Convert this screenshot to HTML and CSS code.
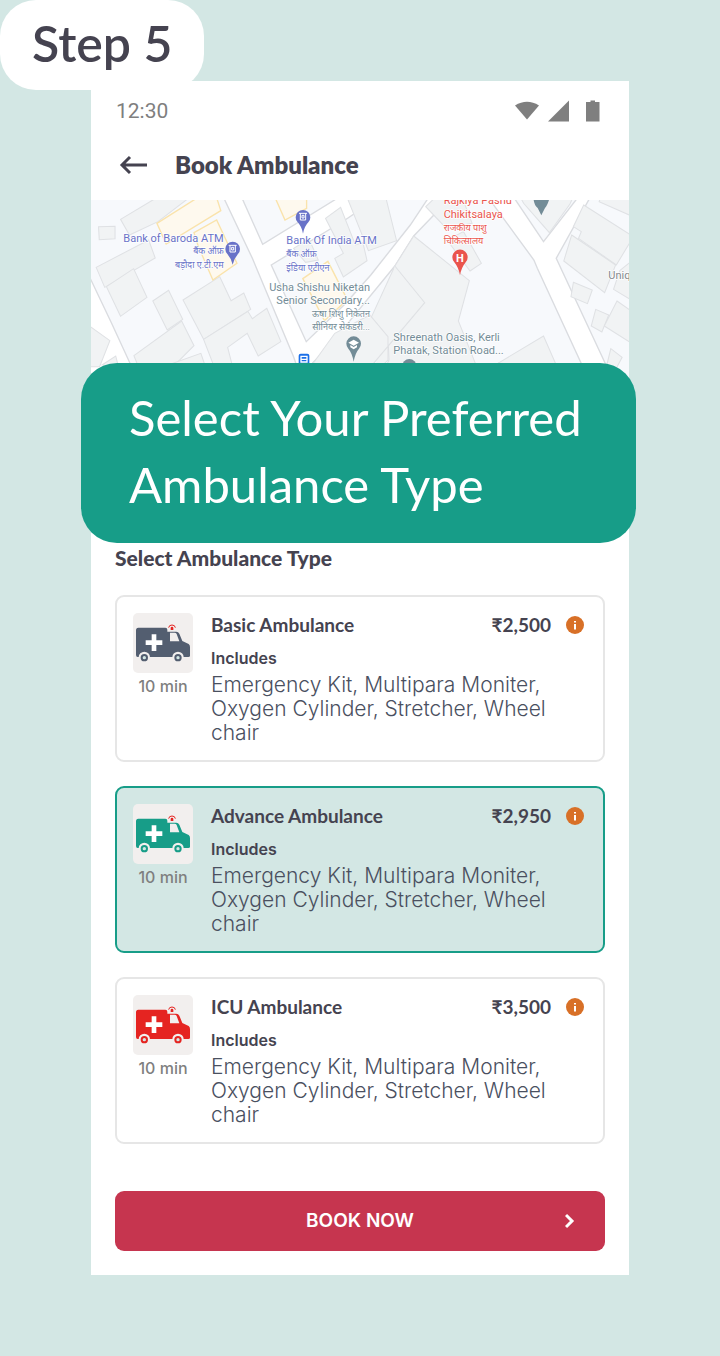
FILE: index.html
```html
<!DOCTYPE html>
<html lang="en">
<head>
<meta charset="utf-8">
<meta name="viewport" content="width=device-width, initial-scale=1">
<title>Book Ambulance</title>
<link rel="stylesheet" href="styles.css">
</head>
<body>
<svg width="0" height="0" class="defs" aria-hidden="true">
  <symbol id="ambulance" viewBox="0 0 180 180">
    <path fill="currentColor" d="M16 44H97Q103 44 103 50V56H130Q136 56 139 62L148 84L167 93Q171 96 171 102V128Q171 132 166 132H14Q9 132 9 126V52Q9 44 16 44Z"/>
    <path fill="#f2efee" d="M111 59H125Q129 59 131 63L139 85H111Z"/>
    <path fill="#fff" d="M56 64H70V82H88V96H70V114H56V96H38V82H56Z"/>
    <g fill="#f2efee"><circle cx="34" cy="133" r="17"/><circle cx="135" cy="133" r="17"/></g>
    <g fill="#d3e7e4" stroke="currentColor" stroke-width="6"><circle cx="34" cy="134" r="8"/><circle cx="135" cy="134" r="8"/></g>
    <path fill="none" stroke="#e52421" stroke-width="3" d="M107 44Q108 36 117 36T127 44"/>
    <path fill="#e52421" d="M113 51V45Q113 41 117 41T121 45V51Z"/>
  </symbol>
  <symbol id="info" viewBox="0 0 18 18">
    <circle cx="9" cy="9" r="9" fill="#d87027"/>
    <path fill="#fff" d="M8 5h2v1.500H8zM8 8h2v5.500H8z"/>
  </symbol>
</svg>

<p class="step">Step 5</p>

<main class="phone">
  <div class="status">
    <span>12:30</span>
    <svg class="status-icons" viewBox="0 0 86 22" aria-hidden="true">
      <path d="M0 5.500Q12 -2 24 5.500L12 19.500Z"/>
      <path d="M33 21.500L54 0.500V21.500Z"/>
      <path d="M71 2H75.500V0.500H80V2H84.500V21.500H71Z"/>
    </svg>
  </div>

  <header class="bar">
    <button class="back" type="button" aria-label="Back">
      <svg viewBox="0 0 28 20" aria-hidden="true"><path d="M28 10H3M11 2L3 10L11 18"/></svg>
    </button>
    <h1>Book Ambulance</h1>
  </header>

  <section class="stage">
    <svg class="map" viewBox="0 0 1614 600" preserveAspectRatio="xMidYMin slice" role="img" aria-label="Map">
      <g transform="scale(1.03 1)">
        <g class="block">
          <path d="M-10 220L0 240L60 370L145 560H620L590 470L470 175L385 -10H-10Z"/>
          <path d="M438 -10L500 133L725 -10Z"/>
          <path d="M525 195L740 60L840 -10H985L930 75L815 225L740 312L627 425Z"/>
          <path d="M640 495L700 430L885 198L940 108L1050 -10H1155L1240 110L1290 180L1300 205L1430 495L1460 600H600Z"/>
          <path d="M1230 -10L1318 125L1420 -10Z"/>
          <path d="M1455 -10L1355 175L1500 495L1540 600H1620V-10Z"/>
        </g>
        <g class="building">
          <path d="M86 58L180 0L200 -10H290L195 65L112 105Z"/><path d="M22 80L70 79V116L24 119Z"/>
          <path d="M15 202L168 120L187 174L40 262Z"/><path d="M45 260L124 206L163 292L86 349Z"/>
          <path d="M180 303L226 271L267 358L222 390Z"/>
          <path d="M268 300L375 230L408 302L445 279L465 328L328 418Z"/>
          <path d="M125 467L264 363L300 437L210 530H150Z"/>
          <path d="M328 418L457 334L470 356L512 325L553 425L487 468L455 400L398 442L420 530H370Z"/>
          <path d="M210 500L320 460L340 520Z"/><path d="M-5 378L55 422L25 500H-5Z"/><path d="M32 495L72 468L80 500Z"/>
          <path d="M590 145L635 117L662 180L625 187Z"/>
          <path d="M683 55L727 22L770 135L792 128L804 182L735 231L710 175L735 160Z"/>
          <path d="M745 -10H858L890 122L808 152Z"/>
          <path d="M940 108L1102 242L1070 363L1135 530H845L868 480L865 410L815 355L885 198Z"/>
          <path d="M885 198L972 308L815 500H640L710 400L812 345L865 410V480L825 520"/>
          <path d="M1185 490L1318 408L1355 495Z"/>
          <path d="M1037 120L1085 95L1137 190L1104 213Z"/>
          <path d="M975 20L1005 -10H1080L1110 70L1035 85Z"/>
          <path d="M1250 -10H1405L1395 12L1335 98L1260 10Z"/>
          <path d="M1435 15L1580 110L1530 195L1420 115L1428 95L1405 80Z"/>
          <path d="M1400 105L1528 195L1496 278L1377 183Z"/>
          <path d="M1405 247L1460 270L1446 311L1398 290Z"/><path d="M1470 328L1508 345L1488 396L1457 378Z"/>
          <path d="M1532 303L1590 345V440L1495 378Z"/><path d="M1540 212L1590 170V310L1522 268Z"/>
          <path d="M1514 446L1547 472L1530 505H1500Z"/><path d="M1485 -10H1590V55L1480 5Z"/>
        </g>
        <g class="shop">
          <path d="M192 70L315 -10H365L378 32L219 132Z"/><path d="M300 98L366 60L425 190L355 240L313 140Z"/>
          <path d="M535 -10H628V25L565 60Z"/><path d="M617 236L690 184L742 290L735 310L680 362Z"/>
        </g>
      </g>

      <g class="pins">
        <path class="indigo" d="M425 194Q420 174 409 162A22 22 0 1 1 441 162Q430 174 425 194Z"/>
        <path class="white-line" d="M413 136H437M417 136V156H433V136M422 142H428V150H422Z"/>
        <path class="indigo" d="M636 101Q632 79 620 67A22 22 0 1 1 652 67Q640 79 636 101Z"/>
        <path class="white-line" d="M624 40H648M628 40V60H644V40M633 46H639V54H633Z"/>
        <path class="slate" d="M788 485Q783 458 772 446A22 22 0 1 1 804 446Q793 458 788 485Z"/>
        <path fill="#fff" d="M788 419L804 428L788 437L772 428ZM778 435L788 441L798 435V442L788 448L778 442Z"/>
        <path class="red" d="M1107 226Q1103 203 1090 187A23 23 0 1 1 1124 187Q1111 203 1107 226Z"/>
        <path class="slate" d="M1328 0H1374Q1368 18 1362 24L1351 46L1340 24Q1330 16 1328 0Z"/>
        <circle class="slate" cx="955" cy="499" r="22"/>
        <rect x="623" y="461" width="32" height="44" rx="6" fill="#1a6fe8"/>
        <path d="M630 469H648V486H630ZM632 478H646" fill="none" stroke="#fff" stroke-width="4"/>
      </g>

      <g class="labels">
        <g class="indigo" text-anchor="end">
          <text x="398" y="125">Bank of Baroda ATM</text>
          <text class="hi" x="398" y="163">बैंक ऑफ़</text>
          <text class="hi" x="398" y="205">बड़ौदा ए.टी.एम</text>
        </g>
        <g class="indigo">
          <text x="586" y="133">Bank Of India ATM</text>
          <text class="hi" x="586" y="172">बैंक ऑफ़</text>
          <text class="hi" x="586" y="212">इंडिया एटीएन</text>
        </g>
        <g class="slate" text-anchor="end">
          <text x="837" y="272">Usha Shishu Niketan</text>
          <text x="837" y="313">Senior Secondary...</text>
          <text class="hi" x="837" y="350">ऊषा शिशु निकेतन</text>
          <text class="hi" x="837" y="390">सीनियर सेकंडरी...</text>
        </g>
        <g class="red">
          <text x="1058" y="12">Rajkiya Pashu</text>
          <text x="1058" y="53">Chikitsalaya</text>
          <text class="hi" x="1058" y="92">राजकीय पाशु</text>
          <text class="hi" x="1058" y="131">चिकित्सालय</text>
        </g>
        <text class="hospital" x="1107" y="187" text-anchor="middle">H</text>
        <g class="slate">
          <text x="907" y="422">Shreenath Oasis, Kerli</text>
          <text x="907" y="463">Phatak, Station Road...</text>
        </g>
        <text class="grey" x="1552" y="238">Uniq</text>
      </g>
    </svg>
    <p class="callout">Select Your Preferred Ambulance Type</p>
  </section>

  <section class="booking">
    <h2 id="types">Select Ambulance Type</h2>
    <div class="options" role="radiogroup" aria-labelledby="types">
      <label class="card">
        <input class="pick" type="radio" name="type">
        <span class="media slate-van"><svg class="van" aria-hidden="true"><use href="#ambulance"/></svg><span class="eta">10 min</span></span>
        <span class="details">
          <span class="top"><span class="name">Basic Ambulance</span><span class="price">₹2,500</span><button class="info" type="button" aria-label="About Basic Ambulance"><svg aria-hidden="true"><use href="#info"/></svg></button></span>
          <span class="includes">Includes</span>
          <span class="desc">Emergency Kit, Multipara Moniter, Oxygen Cylinder, Stretcher, Wheel chair</span>
        </span>
      </label>
      <label class="card">
        <input class="pick" type="radio" name="type" checked>
        <span class="media green-van"><svg class="van" aria-hidden="true"><use href="#ambulance"/></svg><span class="eta">10 min</span></span>
        <span class="details">
          <span class="top"><span class="name">Advance Ambulance</span><span class="price">₹2,950</span><button class="info" type="button" aria-label="About Advance Ambulance"><svg aria-hidden="true"><use href="#info"/></svg></button></span>
          <span class="includes">Includes</span>
          <span class="desc">Emergency Kit, Multipara Moniter, Oxygen Cylinder, Stretcher, Wheel chair</span>
        </span>
      </label>
      <label class="card">
        <input class="pick" type="radio" name="type">
        <span class="media red-van"><svg class="van" aria-hidden="true"><use href="#ambulance"/></svg><span class="eta">10 min</span></span>
        <span class="details">
          <span class="top"><span class="name">ICU Ambulance</span><span class="price">₹3,500</span><button class="info" type="button" aria-label="About ICU Ambulance"><svg aria-hidden="true"><use href="#info"/></svg></button></span>
          <span class="includes">Includes</span>
          <span class="desc">Emergency Kit, Multipara Moniter, Oxygen Cylinder, Stretcher, Wheel chair</span>
        </span>
      </label>
    </div>
    <button class="book" type="button">
      <span>BOOK NOW</span>
      <svg viewBox="0 0 10 16" aria-hidden="true"><path d="M1 2L7 8L1 14"/></svg>
    </button>
  </section>
</main>
</body>
</html>
```
FILE: styles.css
```css
* { box-sizing: border-box; }

body {
  margin: 0;
  padding: 81px 91px;
  background: #d3e7e4;
  color: #454350;
  font-family: Inter, "Open Sans", sans-serif;
}

h1, h2, p { margin: 0; }
button { padding: 0; border: 0; background: none; color: inherit; cursor: pointer; }
svg { display: block; }
.defs { position: absolute; }

.step {
  position: absolute;
  top: 0;
  left: 0;
  padding: 10px 32px 14px;
  border-radius: 36px;
  background: #fff;
  font: 600 50px/66px Lato, sans-serif;
}

.phone { background: #fff; }

.status {
  display: flex;
  justify-content: space-between;
  align-items: center;
  padding: 18px 28px 0 25px;
  color: #7f7f7f;
  font: 400 21px/24px Roboto, sans-serif;
}
.status-icons { width: 86px; height: 22px; fill: #7f7f7f; }

.bar {
  display: flex;
  align-items: center;
  gap: 28px;
  padding: 26px 28px 19px;
}
.bar h1 { font: 800 24px/32px Lato, sans-serif; }
.back svg {
  width: 28px;
  height: 20px;
  fill: none;
  stroke: #454350;
  stroke-width: 3;
}

.stage { position: relative; padding-bottom: 143px; }
.map { width: 100%; height: 200px; background: #fff; }
.block { fill: #f7f9fc; stroke: #dadce0; stroke-width: 4; }
.building { fill: #f1f3f4; stroke: #dfe1e4; stroke-width: 3; }
.shop { fill: #fef9ee; stroke: #fae3ab; stroke-width: 4; }
.indigo { fill: #6872c8; }
.slate { fill: #738c97; }
.red { fill: #ea544d; }
.grey { fill: #85898e; }
.white-line { fill: none; stroke: #fff; stroke-width: 3; }
.labels { font: 400 33px Roboto, "Noto Sans", sans-serif; }
.labels text { stroke: #fff; stroke-width: 4px; paint-order: stroke; }
.labels .hi { font-size: 27px; }
.labels .hospital { fill: #fff; stroke: none; font-weight: 700; }

.callout {
  position: absolute;
  right: -7px;
  bottom: 0;
  left: -10px;
  padding: 21px 48px 25px;
  border-radius: 36px;
  background: #179d88;
  color: #fff;
  font: 400 49px/67px Lato, sans-serif;
}

.booking { padding: 0 24px 24px; }
.booking h2 { margin-bottom: 22px; font: 900 21px/30px Lato, sans-serif; }

.options { display: grid; gap: 24px; }
.card {
  display: flex;
  gap: 18px;
  padding: 16px 19px 15px 16px;
  border: 2px solid #e6e6e6;
  border-radius: 9px;
  cursor: pointer;
}
.card:has(.pick:checked) { border-color: #179d88; background: #d3e7e4; }
.pick { position: absolute; opacity: 0; pointer-events: none; }

.media { display: flex; flex: none; flex-direction: column; align-items: center; gap: 3px; }
.van { width: 60px; height: 60px; border-radius: 5px; background: #f2efee; }
.slate-van { color: #535e70; }
.green-van { color: #179d88; }
.red-van { color: #e52421; }
.eta { color: #7f7f7f; font-size: 16px; line-height: 20px; font-weight: 500; }

.details { display: flex; flex: 1; flex-direction: column; }
.top { display: flex; align-items: center; font: 700 19px/24px Lato, sans-serif; }
.name { flex: 1; }
.info { margin-left: 15px; }
.info svg { width: 18px; height: 18px; }
.includes { margin: 11px 0 5px; font-size: 16px; line-height: 20px; font-weight: 600; }
.desc { padding-right: 30px; color: #4a505f; font-size: 21px; line-height: 24px; font-weight: 300; }

.book {
  display: grid;
  grid-template-columns: 1fr auto 1fr;
  align-items: center;
  width: 100%;
  margin-top: 47px;
  padding: 18px 30px;
  border-radius: 9px;
  background: #c6354f;
  color: #fff;
  font: 600 19px/24px Inter, sans-serif;
}
.book span { grid-column: 2; }
.book svg {
  justify-self: end;
  width: 10px;
  height: 16px;
  fill: none;
  stroke: #fff;
  stroke-width: 3;
}
```
